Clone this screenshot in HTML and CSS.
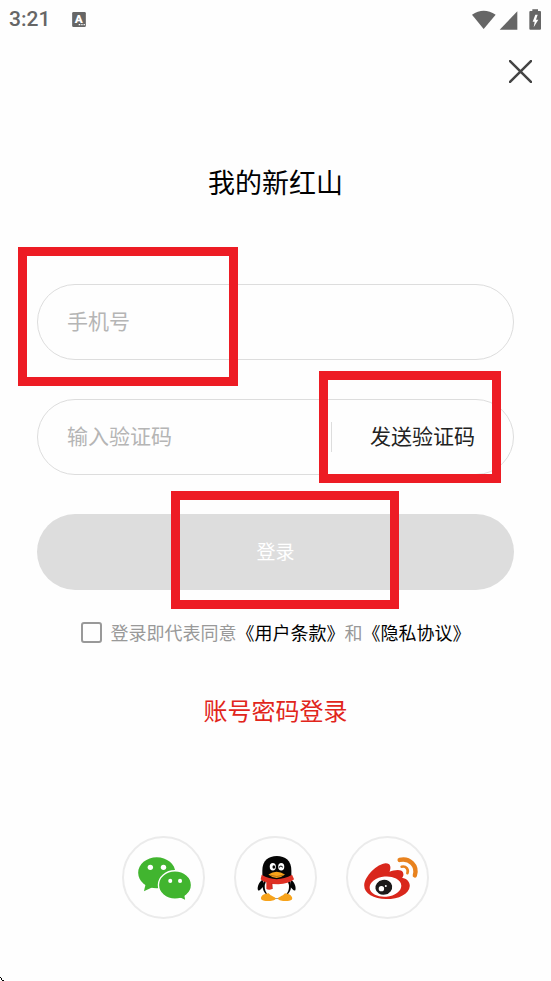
FILE: index.html
```html
<!DOCTYPE html>
<html lang="zh-CN">

<head>
    <meta charset="UTF-8">
    <meta name="viewport" content="width=device-width, initial-scale=1.0">
    <title>我的新红山</title>
    <link rel="stylesheet" href="styles.css">
</head>

<body>
    <header class="status-bar">
        <span class="time">3:21</span>
        <svg class="app-badge" viewBox="0 0 42 46" aria-hidden="true">
            <rect width="42" height="46" rx="4" fill="#666" />
            <text x="20" y="33" text-anchor="middle" class="badge-letter">A</text>
            <path d="M20 37h5v4h-5zM28 37h4v4h-4zM35 37h4v4h-4z" fill="#fff" />
        </svg>
        <svg class="status-icons" viewBox="66 21 207 63" aria-hidden="true">
            <path d="M66 38Q101 14 137 38L101 81Z" />
            <path d="M202 28V83H149Z" />
            <path d="M247 27V22H264V27H270Q273 27 273 30V80Q273 83 270 83H241Q238 83 238 80V30Q238 27 241 27Z" />
            <path d="M256 38L248 59H254L251 76L265 53H258L263 38Z" fill="#fff" />
        </svg>
    </header>

    <div class="top-row">
        <button class="close-btn" type="button" aria-label="关闭">
            <svg viewBox="0 0 22 22"><path d="M1 1L21 21M21 1L1 21" /></svg>
        </button>
    </div>

    <main>
        <h1>我的新红山</h1>

        <form class="login-form">
            <div class="field mark mark-phone">
                <input type="tel" placeholder="手机号" aria-label="手机号">
            </div>
            <div class="field mark mark-code">
                <input type="text" placeholder="输入验证码" aria-label="输入验证码">
                <button class="code-btn" type="button">发送验证码</button>
            </div>
            <div class="mark mark-login">
                <button class="login-btn" type="button">登录</button>
            </div>
            <div class="terms">
                <input type="checkbox" id="agree">
                <label for="agree">登录即代表同意<a href="#">《用户条款》</a>和<a href="#">《隐私协议》</a></label>
            </div>
        </form>

        <a class="password-link" href="#">账号密码登录</a>

        <div class="social">
            <button type="button" aria-label="微信">
                <svg viewBox="42 39 234 234">
                    <g fill="#41b52f">
                        <ellipse cx="139" cy="142" rx="55" ry="46" />
                        <path d="M106 176L101 197L128 184Z" />
                        <ellipse cx="193" cy="178" rx="49" ry="42" stroke="#fff" stroke-width="4" />
                        <path d="M198 216Q207 213 223 222L220 204Z" />
                    </g>
                    <g fill="#fff">
                        <circle cx="120" cy="126" r="8" />
                        <circle cx="159" cy="126" r="8" />
                        <circle cx="179" cy="166" r="6" />
                        <circle cx="208" cy="166" r="6" />
                    </g>
                </svg>
            </button>
            <button type="button" aria-label="QQ">
                <svg viewBox="33 39 234 234">
                    <!-- wings and body -->
                    <path d="M113 161C102 168 95 183 98 193C101 199 108 188 113 184ZM195 161C205 168 212 183 209 193C206 199 199 188 194 184Z" fill="#050505" />
                    <ellipse cx="154" cy="182" rx="42" ry="37" fill="#050505" />
                    <ellipse cx="154" cy="184" rx="36" ry="34" fill="#fff" />
                    <path d="M111 152V135C111 106 129 92 154 92S197 106 197 135V152Q154 178 111 152Z" fill="#050505" />
                    <!-- feet -->
                    <path d="M121 204C109 207 104 216 109 222C116 228 147 227 151 219C151 214 136 212 130 203ZM186 204C196 207 203 216 198 222C191 228 161 227 157 219C157 214 171 212 178 203Z" fill="#f7a31b" />
                    <!-- scarf -->
                    <path d="M109 148Q153 174 199 148L205 161Q189 174 158 176L140 175V190Q131 194 123 190V170Q112 168 106 161Z" fill="#df3024" />
                    <path d="M139 173L141 190" stroke="#a92019" stroke-width="2" />
                    <!-- face -->
                    <ellipse cx="142" cy="124" rx="9" ry="11" fill="#fff" />
                    <ellipse cx="167" cy="124" rx="9" ry="11" fill="#fff" />
                    <ellipse cx="145" cy="125" rx="4" ry="5" fill="#050505" />
                    <path d="M161 126Q166 118 171 126" fill="none" stroke="#050505" stroke-width="3" />
                    <path d="M129 147Q153 131 178 147Q153 168 129 147Z" fill="#f7a31b" />
                    <path d="M133 149Q154 157 174 149" fill="none" stroke="#9b5910" stroke-width="2" />
                </svg>
            </button>
            <button type="button" aria-label="微博">
                <svg viewBox="39 39 234 234">
                    <path d="M87 180C87 153 126 115 151 114C166 114 167 127 162 139C177 133 197 130 202 141C205 149 202 154 199 157C213 160 222 168 222 181C220 205 190 220 152 220C115 220 87 204 87 180Z" fill="#d9271c" />
                    <ellipse cx="150" cy="183" rx="47" ry="30" transform="rotate(-5 150 183)" fill="#fff" />
                    <ellipse cx="145" cy="185" rx="25" ry="22" transform="rotate(-10 145 185)" fill="#1c1a1a" />
                    <circle cx="138" cy="189" r="8" fill="#fff" />
                    <circle cx="151" cy="181" r="3" fill="#fff" />
                    <g fill="none" stroke="#e8821e" stroke-linecap="round">
                        <path d="M192 104C221 97 246 121 237 150" stroke-width="13" />
                        <path d="M198 124C211 121 219 132 215 143" stroke-width="8" />
                    </g>
                </svg>
            </button>
        </div>
    </main>

    <svg class="corner" viewBox="0 0 4 4" aria-hidden="true">
        <path d="M0 0h1v1H0zM1 1h1v1H1zM1 2h1v1H1zM2 3h2v1H2z" />
    </svg>
</body>

</html>
```
FILE: styles.css
```css
:root {
    --line: #ddd;
    --red: #ed1c24;
}

*,
*::after {
    box-sizing: border-box;
}

body {
    margin: 0;
    min-height: 100vh;
    position: relative;
    background-color: #fefefe;
    color: #000;
    font-family: "Noto Sans CJK SC", sans-serif;
}

button,
input {
    font-family: inherit;
    margin: 0;
    padding: 0;
    border: none;
    background: none;
}

button {
    cursor: pointer;
}

a {
    color: inherit;
    text-decoration: none;
}

svg {
    display: block;
}

.status-bar {
    display: flex;
    align-items: center;
    height: 38px;
    padding: 0 10px 0 9px;
}

.time {
    font-family: Roboto, sans-serif;
    font-size: 21px;
    font-weight: 500;
    color: #666;
}

.app-badge {
    width: 14px;
    height: 15px;
    margin-left: 22px;
}

.badge-letter {
    font-family: Roboto, sans-serif;
    font-size: 36px;
    font-weight: 900;
    fill: #fff;
}

.status-icons {
    width: 69px;
    height: 21px;
    margin-left: auto;
    fill: #666;
}

.top-row {
    display: flex;
    justify-content: flex-end;
    padding: 22px 19px 0;
}

.close-btn svg {
    width: 23px;
    height: 23px;
    fill: none;
    stroke: #444;
    stroke-width: 2.4;
    stroke-linecap: round;
}

main {
    display: flex;
    flex-direction: column;
    align-items: center;
    padding: 83px 37px 60px;
}

h1 {
    margin: 0;
    font-size: 27px;
    font-weight: 400;
    line-height: 32px;
}

.login-form {
    display: flex;
    flex-direction: column;
    gap: 39px;
    width: 100%;
    margin-top: 86px;
}

.field {
    display: flex;
    align-items: center;
    height: 76px;
    padding-left: 29px;
    border: 1px solid var(--line);
    border-radius: 38px;
}

.field input {
    flex: 1;
    min-width: 0;
    height: 100%;
    padding-bottom: 4px;
    font-size: 21px;
    outline: none;
}

.field input::placeholder {
    color: #b5b5b5;
}

.code-btn {
    height: 30px;
    padding: 0 38px 4px;
    border-left: 1px solid var(--line);
    font-size: 21px;
    line-height: 26px;
    color: #222;
}

.login-btn {
    display: block;
    width: 100%;
    height: 76px;
    padding-bottom: 4px;
    border-radius: 38px;
    background-color: #ddd;
    font-size: 19px;
    color: #fff;
}

/* red frames drawn over the controls */
.mark {
    position: relative;
}

.mark::after {
    content: "";
    position: absolute;
    border: 9px solid var(--red);
    pointer-events: none;
}

.mark-phone::after {
    top: -38px;
    left: -20px;
    width: 220px;
    height: 139px;
}

.mark-code::after {
    top: -29px;
    right: 12px;
    width: 182px;
    height: 112px;
}

.mark-login::after {
    top: -23px;
    left: 134px;
    width: 228px;
    height: 118px;
}

.terms {
    display: flex;
    justify-content: center;
    align-items: center;
    gap: 9px;
    margin-top: -8px;
    font-size: 18px;
    line-height: 22px;
    color: #999;
}

.terms input {
    appearance: none;
    width: 21px;
    height: 21px;
    border: 2px solid #999;
    border-radius: 3px;
}

.terms input:checked {
    background-color: #999;
}

.terms a {
    color: #000;
}

.password-link {
    margin-top: 52px;
    font-size: 24px;
    line-height: 30px;
    color: #e1251b;
}

.social {
    display: flex;
    gap: 29px;
    margin-top: 111px;
}

.social button {
    width: 83px;
    height: 83px;
    border: 2px solid #ebebeb;
    border-radius: 50%;
}

.corner {
    position: absolute;
    left: 0;
    bottom: 0;
    width: 4px;
    height: 4px;
}
```
